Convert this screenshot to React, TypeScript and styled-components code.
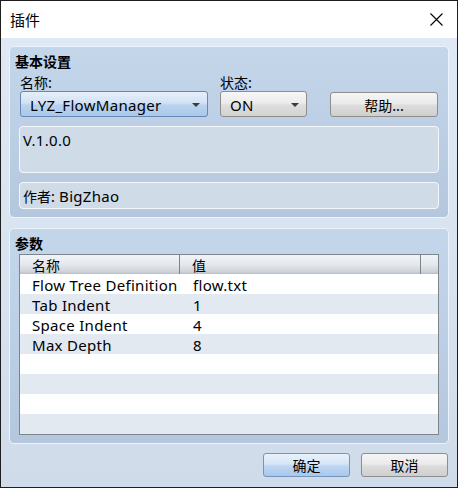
import React from "react";
import styled, { createGlobalStyle } from "styled-components";

const GlobalStyle = createGlobalStyle`
  html, body { margin: 0; padding: 0; background: #ffffff; }
  * { box-sizing: border-box; }
  body {
    font-family: "Noto Sans", "Noto Sans CJK SC", sans-serif;
    color: #111;
  }
`;

const latin = `"Noto Sans", "Noto Sans CJK SC", sans-serif`;
const cjk = `"Noto Sans CJK SC", "Noto Sans", sans-serif`;

const Window = styled.div`
  width: 458px;
  height: 488px;
  border: 1px solid #1e1e1e;
  display: flex;
  flex-direction: column;
  overflow: hidden;
`;

const TitleBar = styled.div`
  height: 37px;
  flex: none;
  background: #ffffff;
  display: flex;
  align-items: center;
  justify-content: space-between;
  padding: 0 14px 0 9px;
`;

const Title = styled.span`
  font-family: ${cjk};
  font-size: 15px;
  line-height: 20px;
  color: #000;
`;

const CloseIcon = styled.svg`
  width: 13px;
  height: 13px;
  display: block;
`;

const Body = styled.div`
  flex: 1;
  display: flex;
  flex-direction: column;
  padding: 8px 8px 10px 8px;
  background: linear-gradient(180deg, #dfe9f6 0%, #d6e2ef 60%, #cfdbe8 100%);
`;

const GroupBox = styled.div<{ $grow?: boolean; $h?: number }>`
  display: flex;
  flex-direction: column;
  ${(p) => (p.$grow ? "flex: 1;" : `height: ${p.$h}px; flex: none;`)}
  border: 1px solid #edf3fa;
  border-radius: 5px;
  background: linear-gradient(180deg, #c4d6ea 0%, #bccfe4 50%, #b4c7dc 100%);
  padding: 4px 9px 7px 9px;
  & + & { margin-top: 10px; }
`;

const GroupTitle = styled.div`
  font-family: ${cjk};
  font-weight: 700;
  font-size: 14px;
  line-height: 20px;
  margin-left: -4px;
  color: #000;
`;

const FieldRow = styled.div`
  display: flex;
  align-items: flex-end;
  margin-top: 2px;
  padding-left: 1px;
`;

const Field = styled.div<{ $w: number; $ml?: number }>`
  width: ${(p) => p.$w}px;
  margin-left: ${(p) => p.$ml ?? 0}px;
  display: flex;
  flex-direction: column;
`;

const Label = styled.div`
  font-family: ${cjk};
  font-size: 14px;
  line-height: 18px;
  color: #000;
`;

const Combo = styled.div<{ $active?: boolean }>`
  height: 26px;
  border-radius: 3px;
  border: 1px solid ${(p) => (p.$active ? "#6688b3" : "#8d8d8d")};
  background: ${(p) =>
    p.$active
      ? "linear-gradient(180deg, #e6eff9 0%, #d2e2f4 45%, #b9d3ee 55%, #aac8ea 100%)"
      : "linear-gradient(180deg, #f6f6f6 0%, #ececec 45%, #dedede 55%, #d2d2d2 100%)"};
  display: flex;
  align-items: center;
  justify-content: space-between;
  padding: 1px 6px 0 9px;
  font-family: ${latin};
  font-size: 15px;
  letter-spacing: 0.3px;
  color: #000;
`;

const Arrow = styled.span`
  width: 0;
  height: 0;
  border-left: 4px solid transparent;
  border-right: 4px solid transparent;
  border-top: 4px solid #3a3a3a;
  margin-right: 1px;
`;

const Button = styled.button<{ $primary?: boolean; $w: number; $h?: number; $ml?: number }>`
  width: ${(p) => p.$w}px;
  height: ${(p) => p.$h ?? 24}px;
  margin-left: ${(p) => p.$ml ?? 0}px;
  border-radius: 3px;
  border: 1px solid ${(p) => (p.$primary ? "#7396c0" : "#8e8e8e")};
  background: ${(p) =>
    p.$primary
      ? "linear-gradient(180deg, #e9f2fc 0%, #d5e5f7 45%, #bed6f1 55%, #a9c8ea 100%)"
      : "linear-gradient(180deg, #f5f5f5 0%, #ebebeb 45%, #dcdcdc 55%, #cfcfcf 100%)"};
  font-family: ${cjk};
  font-size: 14px;
  line-height: 18px;
  color: #000;
  padding: 0;
  display: flex;
  align-items: center;
  justify-content: center;
  flex: none;
`;

const InfoBox = styled.div<{ $h: number; $mt: number }>`
  height: ${(p) => p.$h}px;
  margin-top: ${(p) => p.$mt}px;
  border: 1px solid #f3f7fb;
  border-radius: 4px;
  background: #cfdbe7;
  padding: 4px 3px 0 3px;
  font-family: ${latin};
  font-size: 15px;
  line-height: 18px;
  letter-spacing: 0.3px;
  color: #000;
`;

const CjkText = styled.span`
  font-family: ${cjk};
  font-size: 14px;
  letter-spacing: 0;
`;

const Table = styled.div`
  margin-top: 1px;
  border: 1px solid #7c848c;
  background: #ffffff;
  display: flex;
  flex-direction: column;
`;

const HeaderRow = styled.div`
  display: grid;
  grid-template-columns: 160px 241px 1fr;
  height: 19px;
  background: linear-gradient(180deg, #f1f4f7 0%, #e4e8ed 50%, #d0d6dc 85%, #b9c0c7 100%);
`;

const HeaderCell = styled.div<{ $sep?: boolean }>`
  border-right: ${(p) => (p.$sep ? "1px solid #7c848c" : "none")};
  padding: 2px 0 0 12px;
  font-family: ${cjk};
  font-size: 14px;
  line-height: 17px;
  color: #000;
  overflow: hidden;
`;

const Row = styled.div<{ $alt: boolean }>`
  display: grid;
  grid-template-columns: 160px 1fr;
  height: 20px;
  background: ${(p) => (p.$alt ? "#e3e9f1" : "#ffffff")};
`;

const Cell = styled.div<{ $first?: boolean }>`
  padding: 2px 0 0 ${(p) => (p.$first ? 12 : 13)}px;
  font-family: ${latin};
  font-size: 15px;
  letter-spacing: 0.3px;
  line-height: 18px;
  color: #000;
  white-space: nowrap;
`;

const ButtonRow = styled.div`
  display: flex;
  justify-content: flex-end;
  margin-top: 9px;
  padding-right: 1px;
`;

const params: [string, string][] = [
  ["Flow Tree Definition", "flow.txt"],
  ["Tab Indent", "1"],
  ["Space Indent", "4"],
  ["Max Depth", "8"],
  ["", ""],
  ["", ""],
  ["", ""],
  ["", ""],
];

export default function App() {
  return (
    <>
      <GlobalStyle />
      <Window>
        <TitleBar>
          <Title>插件</Title>
          <CloseIcon viewBox="0 0 13 13">
            <path d="M0.5 0.5 L12.5 12.5 M12.5 0.5 L0.5 12.5" stroke="#000" strokeWidth="1.1" fill="none" />
          </CloseIcon>
        </TitleBar>
        <Body>
          <GroupBox $h={172}>
            <GroupTitle>基本设置</GroupTitle>
            <FieldRow>
              <Field $w={188}>
                <Label>名称:</Label>
                <Combo $active>
                  <span>LYZ_FlowManager</span>
                  <Arrow />
                </Combo>
              </Field>
              <Field $w={87} $ml={12}>
                <Label>状态:</Label>
                <Combo>
                  <span>ON</span>
                  <Arrow />
                </Combo>
              </Field>
              <Button $w={108} $h={25} $ml={23}>帮助...</Button>
            </FieldRow>
            <InfoBox $h={47} $mt={9}>V.1.0.0</InfoBox>
            <InfoBox $h={27} $mt={9}>
              <CjkText>作者:</CjkText> BigZhao
            </InfoBox>
          </GroupBox>
          <GroupBox $grow>
            <GroupTitle>参数</GroupTitle>
            <Table>
              <HeaderRow>
                <HeaderCell $sep>名称</HeaderCell>
                <HeaderCell $sep>值</HeaderCell>
                <HeaderCell />
              </HeaderRow>
              {params.map(([k, v], i) => (
                <Row key={i} $alt={i % 2 === 1}>
                  <Cell $first>{k}</Cell>
                  <Cell>{v}</Cell>
                </Row>
              ))}
            </Table>
          </GroupBox>
          <ButtonRow>
            <Button $primary $w={87}>确定</Button>
            <Button $w={87} $ml={11}>取消</Button>
          </ButtonRow>
        </Body>
      </Window>
    </>
  );
}
